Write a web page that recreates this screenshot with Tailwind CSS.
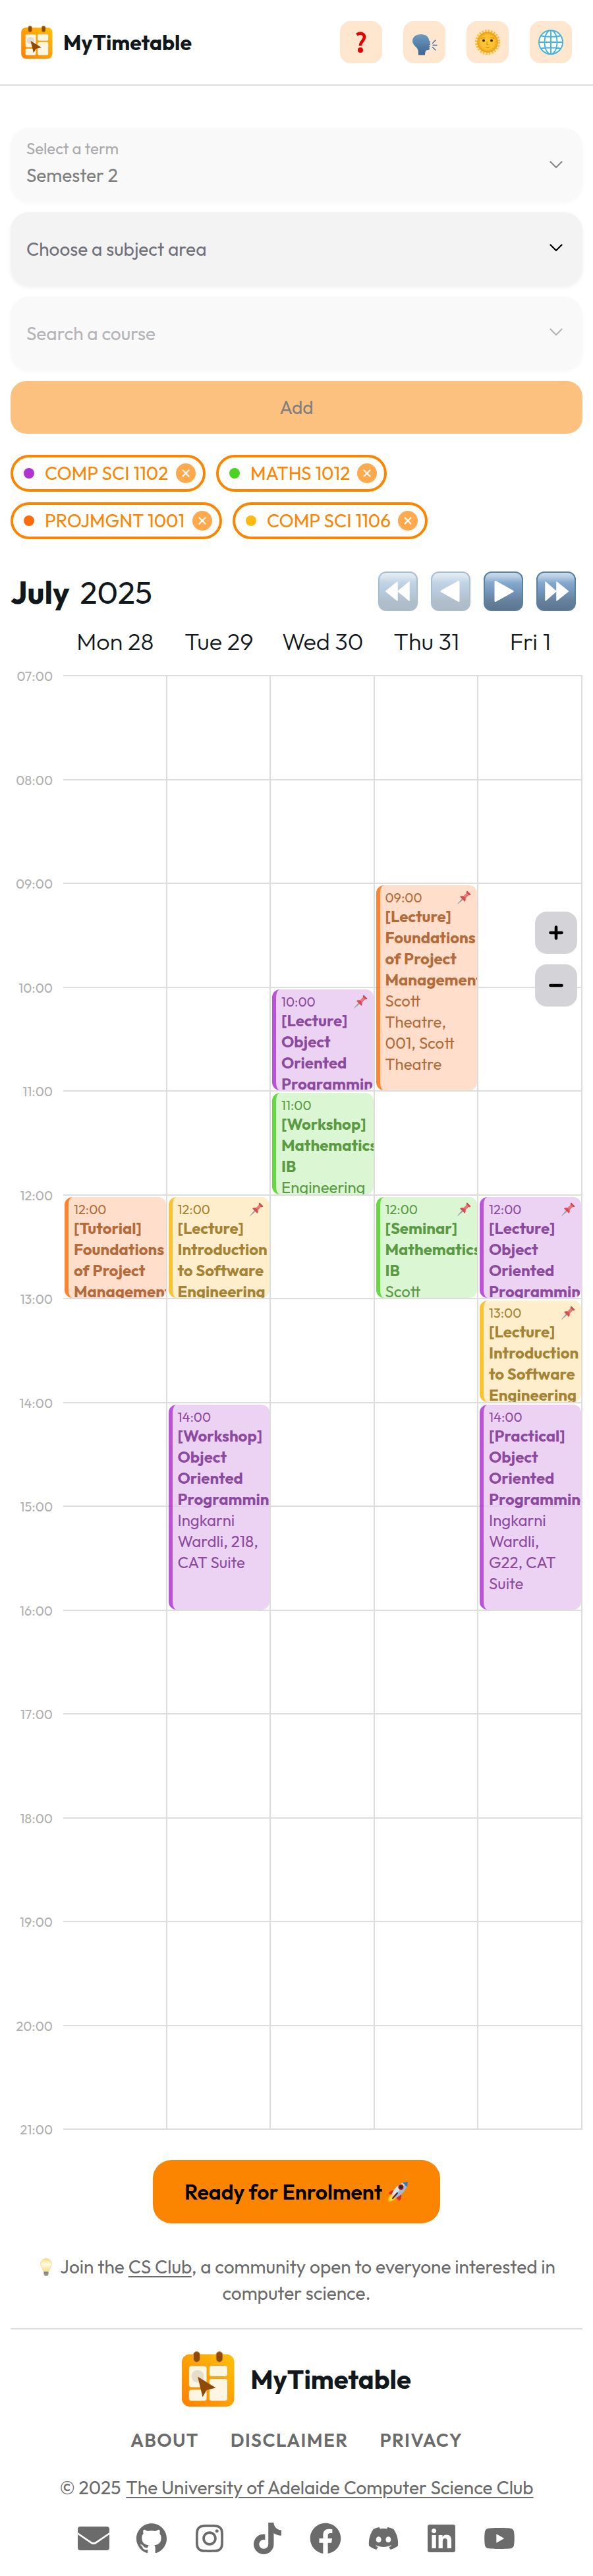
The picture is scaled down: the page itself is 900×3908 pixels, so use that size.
<!DOCTYPE html>
<html lang="en">
<head>
<meta charset="utf-8">
<meta name="viewport" content="width=device-width, initial-scale=1">
<title>MyTimetable</title>
<script src="https://cdn.jsdelivr.net/npm/@tailwindcss/browser@4"></script>
</head>
<body class="bg-white font-[Outfit,Lato,sans-serif] text-[#11181c]">

<!-- Shared symbols -->
<svg class="absolute size-0" aria-hidden="true">
  <defs>
    <linearGradient id="g-logo" x1="0" y1="1" x2="1" y2="0"><stop offset="0" stop-color="#fd8000"/><stop offset="1" stop-color="#ffc107"/></linearGradient>
    <linearGradient id="g-nav" x1="0" y1="0" x2="0" y2="1"><stop offset="0" stop-color="#cfe0ee"/><stop offset=".12" stop-color="#b4cde3"/><stop offset=".28" stop-color="#84a8cc"/><stop offset=".5" stop-color="#7496bd"/><stop offset=".75" stop-color="#66819d"/><stop offset="1" stop-color="#5b758d"/></linearGradient>
    <linearGradient id="g-head" x1="0" y1="0" x2="0" y2="1"><stop offset="0" stop-color="#6d9cc0"/><stop offset="1" stop-color="#3e6490"/></linearGradient>
    <radialGradient id="g-sun"><stop offset="0" stop-color="#fbc93c"/><stop offset=".7" stop-color="#fbc02d"/><stop offset="1" stop-color="#e89a18"/></radialGradient>
    <linearGradient id="g-bulb" x1="0" y1="0" x2="0" y2="1"><stop offset="0" stop-color="#f7dc7a"/><stop offset=".45" stop-color="#fffbe0"/><stop offset="1" stop-color="#f3dc8c"/></linearGradient>
  </defs>
  <symbol id="logo" viewBox="0 0 80 84">
    <rect y="4.500" width="79.500" height="79.500" rx="12" fill="url(#g-logo)"/>
    <g fill="#8f4a06" stroke="#d99a45" stroke-width="1"><rect x="17.500" y=".5" width="10" height="16" rx="5"/><rect x="52" y=".5" width="10" height="16" rx="5"/></g>
    <g fill="#fff5e3" stroke="#f0950c" stroke-width=".8"><rect x="10.500" y="22" width="27.500" height="33" rx="4"/><rect x="10.500" y="58" width="27.500" height="17.500" rx="4"/><rect x="41.500" y="21.500" width="28" height="17" rx="4"/><rect x="41.500" y="41.500" width="28" height="34" rx="4"/></g>
    <circle cx="24" cy="38" r="9.500" fill="#e6dccb"/>
    <path d="M24 38.500 51.500 55.500 37.500 59 31.500 69.500z" fill="#8f4a06"/>
  </symbol>
  <symbol id="pin" viewBox="0 0 21 21">
    <path d="M.5 20.500 7.500 12l1.500 1.500z" fill="#858b93" stroke="#858b93" stroke-width=".8"/>
    <path d="M4 9.500c2-1.500 4.300-1.200 5.500-1L14 4c-.6-1.600-.2-2.600.8-3.500l5.700 5.700c-1 1-2 1.300-3.500.8l-4.500 4.500c.5 1.500.3 3.500-1 5.500z" fill="#d32028"/>
    <path d="M9.800 8.800 14.500 4l2.300 2.300-4.900 4.800z" fill="#ea5a5c"/><path d="M15 .6l5.500 5.500-1.300.7-4.700-4.700z" fill="#b0202a"/>
  </symbol>
  <symbol id="close" viewBox="0 0 30 30">
    <circle cx="15" cy="15" r="15" fill="#fea94c"/><path d="M10.500 10.500l9 9m0-9l-9 9" stroke="#fff" stroke-width="2.200" stroke-linecap="round"/>
  </symbol>
  <symbol id="chevron" viewBox="0 0 20 12"><path d="M1.500 1.500 10 10l8.500-8.500" fill="none" stroke="currentColor" stroke-width="2.200" stroke-linecap="round" stroke-linejoin="round"/></symbol>
</svg>

<header class="flex h-[130px] items-center justify-between border-b-2 border-[#dddddd] px-8">
  <a class="flex items-center gap-4">
    <svg class="h-[50px] w-12"><use href="#logo"/></svg>
    <span class="text-[32px] leading-10 font-bold">MyTimetable</span>
  </a>
  <nav class="flex gap-8">
    <button class="size-16 rounded-2xl bg-[#ffe6cf]">
      <svg viewBox="0 0 64 64"><path d="M25.500 20.500c6-3.800 11.500-1.200 11.500 3.800 0 6-6 6.200-6 13.200" fill="none" stroke="#e60000" stroke-width="4.600"/><circle cx="31" cy="44" r="4" fill="#e60000"/></svg>
    </button>
    <button class="size-16 rounded-2xl bg-[#ffe6cf]">
      <svg viewBox="0 0 64 64"><path d="M23 51.500c0-6-.5-9-3-11.500-3.500-3-6-6.500-6-9.500 0-6.500 5.500-10.500 13-10.500 7.500 0 11.500 3.500 12.300 9.500l2.200 2-1.300 1.500 1.200 2.500-2.500 2 2 1-1.500 1.200.7 3c-1 1.500-3.500 1.500-5.300 1.800-1.200 1.500-1.800 4-1.800 7z" fill="url(#g-head)"/><path d="M44.500 33.500l4.500-4.500M45 36.500h6M44.500 39.500l4.500 4.500" stroke="#33679c" stroke-width="1.300" stroke-linecap="round"/></svg>
    </button>
    <button class="size-16 rounded-2xl bg-[#ffe6cf]">
      <svg viewBox="0 0 64 64"><circle cx="32" cy="32" r="16.800" fill="none" stroke="#fbbf35" stroke-width="4.600" stroke-dasharray="2.500 1.898"/><circle cx="32" cy="32" r="15.500" fill="url(#g-sun)" stroke="#eda320" stroke-width=".6"/><circle cx="26" cy="29.500" r="2" fill="#3a2a36"/><circle cx="38" cy="29.500" r="2" fill="#3a2a36"/><path d="M22.500 26.500q3-2 6-.6M36 25.900q3-1.400 6 .6M31 31v4.500q1.200 1.300 2.400 0" fill="none" stroke="#d88a17" stroke-width="1.100"/><path d="M28 38.800q4.500 1 8.500 0-4 4-8.500 0z" fill="#e0831c"/></svg>
    </button>
    <button class="size-16 rounded-2xl bg-[#ffe6cf]">
      <svg viewBox="0 0 64 64" fill="none" stroke="#45b3dc" stroke-width="1.900"><circle cx="32" cy="32" r="18" fill="#fff"/><ellipse cx="32" cy="32" rx="9.500" ry="18"/><path d="M32 14v36M14 32h36M17 22.500q15 2.500 30 0M17 41.500q15-2.500 30 0"/></svg>
    </button>
  </nav>
</header>

<main class="px-4 pt-16">
  <!-- Course search form -->
  <section class="flex flex-col gap-4">
    <div class="flex h-28 items-center justify-between rounded-[28px] bg-[#f9f9f9] pr-[30px] pl-6 shadow-[0_2px_6px_rgba(0,0,0,0.03)]">
      <div class="mb-[6px] flex flex-col">
        <span class="text-[24px] leading-[38px] text-[#a9a9ac]">Select a term</span>
        <span class="text-[28px] leading-[44px] text-[#7f7f80]">Semester 2</span>
      </div>
      <svg class="h-3 w-5 text-[#8a8a8a]"><use href="#chevron"/></svg>
    </div>
    <div class="flex h-28 items-center justify-between rounded-[28px] bg-[#f3f3f4] pr-[30px] pl-6 shadow-[0_2px_6px_rgba(0,0,0,0.06)]">
      <span class="text-[28px] text-[#71717a]">Choose a subject area</span>
      <svg class="mb-1 h-3 w-5 text-black"><use href="#chevron"/></svg>
    </div>
    <div class="flex h-28 items-center justify-between rounded-[28px] bg-[#f9f9f9] pr-[30px] pl-6 shadow-[0_2px_6px_rgba(0,0,0,0.03)]">
      <span class="text-[28px] text-[#b5b5b9]">Search a course</span>
      <svg class="mb-1 h-3 w-5 text-[#b4b4b4]"><use href="#chevron"/></svg>
    </div>
    <button class="h-20 rounded-[24px] bg-[#fdc17f] text-[28px] text-[#7f7f7f]">Add</button>
  </section>

  <!-- Selected courses -->
  <section class="mt-8 flex flex-wrap gap-4 pr-[200px] text-[28px] whitespace-nowrap text-[#fb8500]">
    <div class="flex h-14 w-[296px] items-center rounded-full border-4 border-[#fb8500] pl-4">
      <span class="size-4 rounded-full bg-[#ae33d0]"></span><span class="ml-4 w-[199px]">COMP SCI 1102</span><svg class="size-[30px]"><use href="#close"/></svg>
    </div>
    <div class="flex h-14 w-[259px] items-center rounded-full border-4 border-[#fb8500] pl-4">
      <span class="size-4 rounded-full bg-[#4ad321]"></span><span class="ml-4 w-[162px]">MATHS 1012</span><svg class="size-[30px]"><use href="#close"/></svg>
    </div>
    <div class="flex h-14 w-[321px] items-center rounded-full border-4 border-[#fb8500] pl-4">
      <span class="size-4 rounded-full bg-[#fb6a0b]"></span><span class="ml-4 w-[224px]">PROJMGNT 1001</span><svg class="size-[30px]"><use href="#close"/></svg>
    </div>
    <div class="flex h-14 w-[296px] items-center rounded-full border-4 border-[#fb8500] pl-4">
      <span class="size-4 rounded-full bg-[#fcb90f]"></span><span class="ml-4 w-[199px]">COMP SCI 1106</span><svg class="size-[30px]"><use href="#close"/></svg>
    </div>
  </section>

  <!-- Calendar toolbar -->
  <section class="mt-[49px] flex h-[60px] items-center justify-between pr-[10px]">
    <h2 class="pt-[2px] text-[48px] leading-[60px]"><span class="mr-4 font-bold">July</span><span>2025</span></h2>
    <div class="flex gap-5">
      <svg class="size-[60px] opacity-50" viewBox="0 0 60 60"><rect x="1" y="1" width="58" height="58" rx="11" fill="url(#g-nav)" stroke="#5a7f9f" stroke-width="2"/><path d="M11.500 30 29 16v28zM30 30l17-14v28z" fill="#fff" stroke="#fff" stroke-width="1.500" stroke-linejoin="round"/></svg>
      <svg class="size-[60px] opacity-50" viewBox="0 0 60 60"><rect x="1" y="1" width="58" height="58" rx="11" fill="url(#g-nav)" stroke="#5a7f9f" stroke-width="2"/><path d="M16 30 42 15.500v29z" fill="#fff" stroke="#fff" stroke-width="3" stroke-linejoin="round"/></svg>
      <svg class="size-[60px]" viewBox="0 0 60 60"><rect x="1" y="1" width="58" height="58" rx="11" fill="url(#g-nav)" stroke="#5a7f9f" stroke-width="2"/><path d="M44 30 18 15.500v29z" fill="#fff" stroke="#fff" stroke-width="3" stroke-linejoin="round"/></svg>
      <svg class="size-[60px]" viewBox="0 0 60 60"><rect x="1" y="1" width="58" height="58" rx="11" fill="url(#g-nav)" stroke="#5a7f9f" stroke-width="2"/><path d="M48.500 30 31 16v28zM30 30 14 16v28z" fill="#fff" stroke="#fff" stroke-width="1.500" stroke-linejoin="round"/></svg>
    </div>
  </section>

  <!-- Day names -->
  <section class="mb-[5px] ml-20 grid h-[92px] w-[787.5px] grid-cols-5 items-center text-center text-[36px] font-light">
    <span>Mon 28</span><span>Tue 29</span><span>Wed 30</span><span>Thu 31</span><span>Fri 1</span>
  </section>

  <!-- Week grid -->
  <section class="relative flex">
    <div id="hours" class="-mt-[10px] h-[2207px] w-20 shrink-0 pr-4 text-right text-[20px] leading-6 text-[#b0b0b0]"></div>
    <div id="week" class="grid grid-cols-[repeat(5,157.5px)] grid-rows-[repeat(14,157.5px)] border-b-2 border-[#dddddd]">

      <article class="z-10 col-start-4 row-span-2 row-start-3 mx-[2px] mt-1 flex overflow-hidden rounded-xl border-l-[6px] border-[#ff6600] bg-[#ffd7bf] text-[#a24708] opacity-80">
        <div class="w-full pt-[7px] pl-2 text-[24px] leading-8 whitespace-nowrap">
          <div class="flex justify-between pr-[9px] text-[20px] leading-6"><span>09:00</span><svg class="mt-px size-[21px]"><use href="#pin"/></svg></div>
          <div class="font-bold">[Lecture]<br>Foundations<br>of Project<br>Management</div>
          <div>Scott<br>Theatre,<br>001, Scott<br>Theatre</div>
        </div>
      </article>

      <article class="z-10 col-start-3 row-start-4 mx-[2px] mt-1 flex overflow-hidden rounded-xl border-l-[6px] border-[#a929cf] bg-[#e8c9f1] text-[#701d87] opacity-80">
        <div class="h-0 w-full pt-[7px] pl-2 text-[24px] leading-8 whitespace-nowrap">
          <div class="flex justify-between pr-[9px] text-[20px] leading-6"><span>10:00</span><svg class="mt-px size-[21px]"><use href="#pin"/></svg></div>
          <div class="font-bold">[Lecture]<br>Object<br>Oriented<br>Programming</div>
        </div>
      </article>

      <article class="z-10 col-start-3 row-start-5 mx-[2px] mt-1 flex overflow-hidden rounded-xl border-l-[6px] border-[#3ed211] bg-[#d2f5c7] text-[#318213] opacity-80">
        <div class="h-0 w-full pt-[7px] pl-2 text-[24px] leading-8 whitespace-nowrap">
          <div class="text-[20px] leading-6">11:00</div>
          <div class="font-bold">[Workshop]<br>Mathematics<br>IB</div>
          <div>Engineering</div>
        </div>
      </article>

      <article class="z-10 col-start-1 row-start-6 mx-[2px] mt-1 flex overflow-hidden rounded-xl border-l-[6px] border-[#ff6600] bg-[#ffd7bf] text-[#a24708] opacity-80">
        <div class="h-0 w-full pt-[7px] pl-2 text-[24px] leading-8 whitespace-nowrap">
          <div class="text-[20px] leading-6">12:00</div>
          <div class="font-bold">[Tutorial]<br>Foundations<br>of Project<br>Management</div>
        </div>
      </article>

      <article class="z-10 col-start-2 row-start-6 mx-[2px] mt-1 flex overflow-hidden rounded-xl border-l-[6px] border-[#fbb300] bg-[#feebbf] text-[#906500] opacity-80">
        <div class="h-0 w-full pt-[7px] pl-2 text-[24px] leading-8 whitespace-nowrap">
          <div class="flex justify-between pr-[9px] text-[20px] leading-6"><span>12:00</span><svg class="mt-px size-[21px]"><use href="#pin"/></svg></div>
          <div class="font-bold">[Lecture]<br>Introduction<br>to Software<br>Engineering</div>
        </div>
      </article>

      <article class="z-10 col-start-4 row-start-6 mx-[2px] mt-1 flex overflow-hidden rounded-xl border-l-[6px] border-[#3ed211] bg-[#d2f5c7] text-[#318213] opacity-80">
        <div class="h-0 w-full pt-[7px] pl-2 text-[24px] leading-8 whitespace-nowrap">
          <div class="flex justify-between pr-[9px] text-[20px] leading-6"><span>12:00</span><svg class="mt-px size-[21px]"><use href="#pin"/></svg></div>
          <div class="font-bold">[Seminar]<br>Mathematics<br>IB</div>
          <div>Scott</div>
        </div>
      </article>

      <article class="z-10 col-start-5 row-start-6 mx-[2px] mt-1 flex overflow-hidden rounded-xl border-l-[6px] border-[#a929cf] bg-[#e8c9f1] text-[#701d87] opacity-80">
        <div class="h-0 w-full pt-[7px] pl-2 text-[24px] leading-8 whitespace-nowrap">
          <div class="flex justify-between pr-[9px] text-[20px] leading-6"><span>12:00</span><svg class="mt-px size-[21px]"><use href="#pin"/></svg></div>
          <div class="font-bold">[Lecture]<br>Object<br>Oriented<br>Programming</div>
        </div>
      </article>

      <article class="z-10 col-start-5 row-start-7 mx-[2px] mt-1 flex overflow-hidden rounded-xl border-l-[6px] border-[#fbb300] bg-[#feebbf] text-[#906500] opacity-80">
        <div class="h-0 w-full pt-[7px] pl-2 text-[24px] leading-8 whitespace-nowrap">
          <div class="flex justify-between pr-[9px] text-[20px] leading-6"><span>13:00</span><svg class="mt-px size-[21px]"><use href="#pin"/></svg></div>
          <div class="font-bold">[Lecture]<br>Introduction<br>to Software<br>Engineering</div>
        </div>
      </article>

      <article class="z-10 col-start-2 row-span-2 row-start-8 mx-[2px] mt-1 flex overflow-hidden rounded-xl border-l-[6px] border-[#a929cf] bg-[#e8c9f1] text-[#701d87] opacity-80">
        <div class="w-full pt-[7px] pl-2 text-[24px] leading-8 whitespace-nowrap">
          <div class="text-[20px] leading-6">14:00</div>
          <div class="font-bold">[Workshop]<br>Object<br>Oriented<br>Programming</div>
          <div>Ingkarni<br>Wardli, 218,<br>CAT Suite</div>
        </div>
      </article>

      <article class="z-10 col-start-5 row-span-2 row-start-8 mx-[2px] mt-1 flex overflow-hidden rounded-xl border-l-[6px] border-[#a929cf] bg-[#e8c9f1] text-[#701d87] opacity-80">
        <div class="w-full pt-[7px] pl-2 text-[24px] leading-8 whitespace-nowrap">
          <div class="text-[20px] leading-6">14:00</div>
          <div class="font-bold">[Practical]<br>Object<br>Oriented<br>Programming</div>
          <div>Ingkarni<br>Wardli,<br>G22, CAT<br>Suite</div>
        </div>
      </article>
    </div>

    <!-- Floating zoom controls -->
    <div class="absolute top-[359px] right-2 z-20 flex flex-col gap-4">
      <button class="size-16 rounded-[18px] bg-[#d4d4d8]"><svg viewBox="0 0 64 64"><path d="M32 23.500v17M23.500 32h17" stroke="#000" stroke-width="4.600" stroke-linecap="round"/></svg></button>
      <button class="size-16 rounded-[18px] bg-[#d4d4d8]"><svg viewBox="0 0 64 64"><path d="M23.500 32h17" stroke="#000" stroke-width="4.600" stroke-linecap="round"/></svg></button>
    </div>
  </section>

  <div class="mt-[46px] flex justify-center">
    <button class="flex h-24 w-[436px] items-center justify-center gap-2 rounded-[28px] bg-[#fb8500] text-[32px] font-semibold whitespace-nowrap text-black">Ready for Enrolment
      <svg class="size-8" viewBox="0 0 32 32"><path d="M2 18q4-5 9-4l-5 9zM18 30q4-4 3-10l-8 5z" fill="#e02a1e"/><path d="M1 31q-1-8 5-12l7 7q-4 6-12 5z" fill="#fdb515"/><path d="M1.500 27l7-8 5 5-8 6z" fill="#fde047"/><path d="M7 19Q14 3 31 .8 30 16 13 25.500z" fill="#9cbbd6"/><path d="M7 19Q14 3 31 .8L10 22z" fill="#d6e4ef"/><path d="M23 2.500Q27 1 31 .8q0 4-1.500 8z" fill="#3f78b5"/><circle cx="20.500" cy="9" r="4" fill="#a31515"/><circle cx="20.500" cy="9" r="2.200" fill="#1f2937"/><path d="M15 18l-7 8" stroke="#5c1512" stroke-width="2" stroke-linecap="round"/></svg>
    </button>
  </div>

  <p class="mt-[46px] text-center text-[28px] leading-10 text-[#6b6b6b]">
    <svg class="mr-[12px] ml-1 inline h-[28px] w-[18px] -translate-y-[2px]" viewBox="0 0 18 28"><path d="M9 .5c5 0 8.300 3.500 8.300 8.300 0 4.500-3.300 6.700-4.300 11.200H5C4 15.500.7 13.300.7 8.800.7 4 4 .5 9 .5z" fill="url(#g-bulb)" stroke="#ecd68c" stroke-width=".8"/><path d="M5.500 20h7v5q-3.500 2.500-7 0z" fill="#a9a9a4"/><path d="M5.500 22.200h7M6.500 25.500h5" stroke="#68686a" stroke-width="1.400"/></svg>Join the <span class="underline decoration-2 underline-offset-4">CS Club</span>, a community open to everyone interested in<br>computer science.
  </p>

  <footer class="mt-[33px] flex flex-col items-center border-t-2 border-[#dddddd] pt-[33px] text-[28px] leading-10 text-[#6b6b6b]">
    <div class="flex items-center gap-6">
      <svg class="h-[84px] w-20"><use href="#logo"/></svg>
      <span class="text-[40px] leading-[50px] font-bold text-[#11181c]">MyTimetable</span>
    </div>
    <nav class="mt-[31px] flex gap-12 font-semibold tracking-wider"><a>ABOUT</a><a>DISCLAIMER</a><a>PRIVACY</a></nav>
    <p class="mt-8 flex gap-2"><span>© 2025</span><a class="underline decoration-2 underline-offset-4">The University of Adelaide Computer Science Club</a></p>
    <div class="mt-[33px] flex gap-10 fill-current">
      <svg class="size-12" viewBox="0 0 48 48"><path d="M0 15v-5a4 4 0 0 1 4-4h40a4 4 0 0 1 4 4v5L28 28.500q-4 3-8 0zM0 18l19.500 13.500q4.500 3 9 0L48 18v20a4 4 0 0 1-4 4H4a4 4 0 0 1-4-4z"/></svg>
      <svg class="size-12" viewBox="-.5 -.3 25 25"><path d="M12 .297c-6.630 0-12 5.373-12 12 0 5.303 3.438 9.800 8.205 11.385.6.113.82-.258.82-.577 0-.285-.01-1.040-.015-2.040-3.338.724-4.042-1.610-4.042-1.610C4.422 18.070 3.633 17.700 3.633 17.700c-1.087-.744.084-.729.084-.729 1.205.084 1.838 1.236 1.838 1.236 1.070 1.835 2.809 1.305 3.495.998.108-.776.417-1.305.76-1.605-2.665-.3-5.466-1.332-5.466-5.930 0-1.310.465-2.380 1.235-3.220-.135-.303-.54-1.523.105-3.176 0 0 1.005-.322 3.300 1.230.96-.267 1.980-.399 3-.405 1.020.006 2.040.138 3 .405 2.280-1.552 3.285-1.230 3.285-1.230.645 1.653.24 2.873.12 3.176.765.84 1.230 1.910 1.230 3.220 0 4.610-2.805 5.625-5.475 5.920.42.36.81 1.096.81 2.220 0 1.606-.015 2.896-.015 3.286 0 .315.21.69.825.57C20.565 22.092 24 17.592 24 12.297c0-6.627-5.373-12-12-12"/></svg>
      <svg class="size-12" viewBox="-32 0 512 512"><path d="M224.100 141c-63.600 0-114.900 51.300-114.900 114.900s51.300 114.900 114.900 114.900S339 319.500 339 255.900 287.700 141 224.100 141zm0 189.600c-41.100 0-74.700-33.500-74.700-74.700s33.500-74.700 74.700-74.700 74.700 33.500 74.700 74.700-33.600 74.700-74.700 74.700zm146.400-194.300c0 14.900-12 26.800-26.800 26.800-14.900 0-26.800-12-26.800-26.800s12-26.800 26.800-26.800 26.800 12 26.800 26.800zm76.100 27.200c-1.700-35.900-9.900-67.700-36.200-93.900-26.200-26.200-58-34.400-93.900-36.200-37-2.100-147.900-2.100-184.900 0-35.800 1.700-67.600 9.900-93.900 36.100s-34.400 58-36.200 93.900c-2.100 37-2.100 147.900 0 184.900 1.700 35.900 9.900 67.700 36.200 93.900s58 34.400 93.900 36.200c37 2.100 147.900 2.100 184.900 0 35.900-1.700 67.700-9.900 93.900-36.200 26.200-26.200 34.400-58 36.200-93.900 2.100-37 2.100-147.800 0-184.800zM398.800 388c-7.800 19.600-22.900 34.700-42.600 42.600-29.500 11.700-99.500 9-132.100 9s-102.700 2.600-132.100-9c-19.600-7.800-34.700-22.900-42.600-42.600-11.700-29.500-9-99.500-9-132.100s-2.600-102.700 9-132.100c7.800-19.600 22.900-34.700 42.600-42.600 29.500-11.700 99.500-9 132.100-9s102.700-2.600 132.100 9c19.600 7.800 34.700 22.900 42.600 42.600 11.700 29.500 9 99.500 9 132.100s2.700 102.700-9 132.100z"/></svg>
      <svg class="size-12" viewBox="-32 0 512 512"><path d="M448 209.900a210.100 210.100 0 0 1-122.800-39.300v178.800A162.600 162.600 0 1 1 185 188.300v89.900a74.600 74.600 0 1 0 52.200 71.200V0h88a121.200 121.200 0 0 0 1.900 22.200 122.200 122.200 0 0 0 53.900 80.200 121.400 121.400 0 0 0 67 20.100z"/></svg>
      <svg class="size-12" viewBox="0 0 512 512"><path d="M504 256C504 119 393 8 256 8S8 119 8 256c0 123.780 90.690 226.380 209.250 245V327.690h-63V256h63v-54.640c0-62.150 37-96.480 93.670-96.480 27.140 0 55.520 4.840 55.520 4.840v61h-31.280c-30.800 0-40.410 19.120-40.410 38.730V256h68.780l-11 71.690h-57.780V501C413.310 482.380 504 379.780 504 256z"/></svg>
      <svg class="size-12" viewBox="-1 -1 26 26"><path d="M20.317 4.370a19.791 19.791 0 0 0-4.885-1.515.074.074 0 0 0-.079.037c-.211.375-.445.865-.608 1.250-1.845-.276-3.680-.276-5.487 0-.164-.393-.406-.874-.618-1.250a.077.077 0 0 0-.079-.037 19.736 19.736 0 0 0-4.885 1.515.07.07 0 0 0-.032.028C.533 9.046-.319 13.580.099 18.058a.082.082 0 0 0 .031.056c2.053 1.508 4.041 2.423 5.993 3.029a.078.078 0 0 0 .084-.028c.462-.630.873-1.295 1.226-1.994a.076.076 0 0 0-.042-.106c-.653-.248-1.274-.550-1.872-.892a.077.077 0 0 1-.008-.128c.126-.094.252-.192.372-.291a.074.074 0 0 1 .078-.011c3.928 1.793 8.180 1.793 12.061 0a.074.074 0 0 1 .079.010c.120.099.246.198.373.292a.077.077 0 0 1-.007.128 12.299 12.299 0 0 1-1.873.891.077.077 0 0 0-.041.107c.360.698.772 1.363 1.225 1.993a.076.076 0 0 0 .084.029c1.961-.607 3.950-1.522 6.002-3.029a.077.077 0 0 0 .031-.055c.500-5.177-.838-9.674-3.549-13.660a.061.061 0 0 0-.031-.029zM8.020 15.331c-1.183 0-2.157-1.086-2.157-2.419 0-1.333.956-2.419 2.157-2.419 1.211 0 2.176 1.095 2.157 2.419 0 1.333-.956 2.419-2.157 2.419zm7.975 0c-1.183 0-2.157-1.086-2.157-2.419 0-1.333.955-2.419 2.157-2.419 1.211 0 2.176 1.095 2.157 2.419 0 1.333-.946 2.419-2.157 2.419z"/></svg>
      <svg class="size-12" viewBox="-32 0 512 512"><path d="M416 32H31.900C14.300 32 0 46.500 0 64.300v383.400C0 465.500 14.300 480 31.900 480H416c17.600 0 32-14.500 32-32.300V64.300c0-17.800-14.400-32.300-32-32.300zM135.400 416H69V202.200h66.500V416zm-33.200-243c-21.300 0-38.500-17.300-38.500-38.500S80.900 96 102.200 96c21.200 0 38.500 17.300 38.500 38.500 0 21.300-17.200 38.500-38.500 38.500zm282.100 243h-66.400V312c0-24.800-.5-56.700-34.500-56.700-34.600 0-39.900 27-39.900 54.900V416h-66.400V202.200h63.700v29.200h.9c8.900-16.800 30.600-34.500 62.900-34.500 67.200 0 79.700 44.300 79.700 101.900V416z"/></svg>
      <svg class="size-12" viewBox="0 -32 576 576"><path d="M549.655 124.083c-6.281-23.650-24.787-42.276-48.284-48.597C458.781 64 288 64 288 64S117.220 64 74.629 75.486c-23.497 6.322-42.003 24.947-48.284 48.597-11.412 42.867-11.412 132.305-11.412 132.305s0 89.438 11.412 132.305c6.281 23.650 24.787 41.500 48.284 47.821C117.220 448 288 448 288 448s170.780 0 213.371-11.486c23.497-6.321 42.003-24.171 48.284-47.821 11.412-42.867 11.412-132.305 11.412-132.305s0-89.438-11.412-132.305zm-317.510 213.508V175.185l142.739 81.205-142.739 81.201z"/></svg>
    </div>
  </footer>
</main>

<script>
  // Hour labels 07:00 – 21:00
  const hours = document.getElementById('hours');
  for (let h = 7; h <= 21; h++) {
    const d = document.createElement('div');
    d.className = 'h-[157.5px] last:h-0';
    d.textContent = String(h).padStart(2, '0') + ':00';
    hours.append(d);
  }
  // Empty background cells, 14 hours by 5 days
  const week = document.getElementById('week');
  for (let r = 1; r <= 14; r++) for (let c = 1; c <= 5; c++) {
    const cell = document.createElement('div');
    cell.className = 'border-t-2 border-r-2 border-[#dddddd]';
    cell.style.gridArea = r + ' / ' + c;
    week.append(cell);
  }
</script>
</body>
</html>
